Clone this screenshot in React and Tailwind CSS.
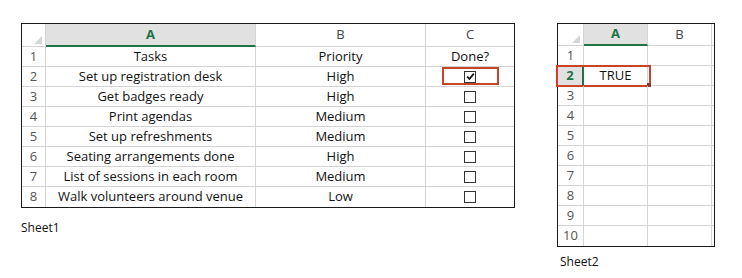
import React from 'react';

const rows1 = [
  ['Tasks', 'Priority', 'head'],
  ['Set up registration desk', 'High', 'checked'],
  ['Get badges ready', 'High', 'empty'],
  ['Print agendas', 'Medium', 'empty'],
  ['Set up refreshments', 'Medium', 'empty'],
  ['Seating arrangements done', 'High', 'empty'],
  ['List of sessions in each room', 'Medium', 'empty'],
  ['Walk volunteers around venue', 'Low', 'empty'],
];

function Corner() {
  return (
    <div className="relative h-full w-full">
      <div className="absolute right-[3px] bottom-[2px] w-0 h-0 border-l-[8px] border-l-transparent border-b-[8px] border-b-[#d6d6d6]" />
    </div>
  );
}

function Checkbox({ checked }) {
  return (
    <div className="w-[12px] h-[12px] border border-[#333] bg-white flex items-center justify-center">
      {checked && (
        <svg width="9" height="9" viewBox="0 0 9 9">
          <path d="M1.2 4.6 L3.5 7 L7.8 1.6" stroke="#111" strokeWidth="1.8" fill="none" />
        </svg>
      )}
    </div>
  );
}

function Sheet1() {
  return (
    <div className="flex flex-col">
      <div className="w-[494px] border border-[#1a1a1a] bg-white">
        {/* header */}
        <div className="flex h-[23px] text-[13px]">
          <div className="w-[24px] border-r border-b border-[#d4d4d4]"><Corner /></div>
          <div className="w-[210px] bg-[#e1e1e1] border-r border-[#d4d4d4] border-b-2 border-b-[#217346] flex items-center justify-center font-bold text-[#217346]">A</div>
          <div className="w-[170px] border-r border-b border-[#d4d4d4] flex items-center justify-center text-[#444]">B</div>
          <div className="flex-1 border-b border-[#d4d4d4] flex items-center justify-center text-[#444]">C</div>
        </div>
        {rows1.map((r, i) => (
          <div key={i} className={`flex h-[20px] text-[13px] ${i < rows1.length - 1 ? 'border-b border-[#d4d4d4]' : ''}`}>
            <div className="w-[24px] border-r border-[#d4d4d4] flex items-center justify-center text-[#555]">{i + 1}</div>
            <div className="w-[210px] border-r border-[#d4d4d4] flex items-center justify-center text-[#111] whitespace-nowrap">{r[0]}</div>
            <div className="w-[170px] border-r border-[#d4d4d4] flex items-center justify-center text-[#111]">{r[1]}</div>
            <div className="relative flex-1 flex items-center justify-center text-[#111]">
              {r[2] === 'head' ? 'Done?' : <Checkbox checked={r[2] === 'checked'} />}
              {r[2] === 'checked' && (
                <div className="absolute left-[16px] right-[15px] top-[0px] bottom-[1px] border-2 border-[#c9432c]" />
              )}
            </div>
          </div>
        ))}
      </div>
      <div className="mt-[12px] text-[12px] leading-[16px] text-[#111]">Sheet1</div>
    </div>
  );
}

function Sheet2() {
  const rows = [1, 2, 3, 4, 5, 6, 7, 8, 9, 10];
  return (
    <div className="flex flex-col">
      <div className="w-[158px] border border-[#1a1a1a] bg-white">
        <div className="flex h-[22px] text-[13px]">
          <div className="w-[26px] border-r border-b border-[#d4d4d4]"><Corner /></div>
          <div className="w-[64px] bg-[#e1e1e1] border-r border-[#d4d4d4] border-b-2 border-b-[#217346] flex items-center justify-center font-bold text-[#217346]">A</div>
          <div className="w-[64px] border-r border-b border-[#d4d4d4] flex items-center justify-center text-[#444]">B</div>
          <div className="flex-1 border-b border-[#d4d4d4]" />
        </div>
        {rows.map((n) => (
          <div key={n} className={`relative flex h-[20px] text-[13px] ${n < 10 ? 'border-b border-[#d4d4d4]' : ''}`}>
            {n === 2 ? (
              <div className="w-[26px] bg-[#e1e1e1] border-r-2 border-[#217346] flex items-center justify-center font-bold text-[#217346]">2</div>
            ) : (
              <div className="w-[26px] border-r border-[#d4d4d4] flex items-center justify-center text-[#555]">{n}</div>
            )}
            <div className="w-[64px] border-r border-[#d4d4d4] flex items-center justify-center text-[#111]">{n === 2 ? 'TRUE' : ''}</div>
            <div className="w-[64px] border-r border-[#d4d4d4]" />
            <div className="flex-1" />
            {n === 2 && (
              <>
                <div className="absolute left-[-2px] top-[-1px] w-[95px] h-[22px] border-2 border-[#c9432c]" />
                <div className="absolute left-[89px] top-[17px] w-[4px] h-[4px] bg-[#8a3a2a]" />
              </>
            )}
          </div>
        ))}
      </div>
      <div className="mt-[7px] ml-[3px] text-[12px] leading-[16px] text-[#111]">Sheet2</div>
    </div>
  );
}

export default function App() {
  return (
    <div className="w-[742px] h-[278px] bg-white flex items-start gap-[42px] pl-[21px] pt-[23px]" style={{ fontFamily: '"Open Sans", "Liberation Sans", sans-serif' }}>
      <Sheet1 />
      <Sheet2 />
    </div>
  );
}
